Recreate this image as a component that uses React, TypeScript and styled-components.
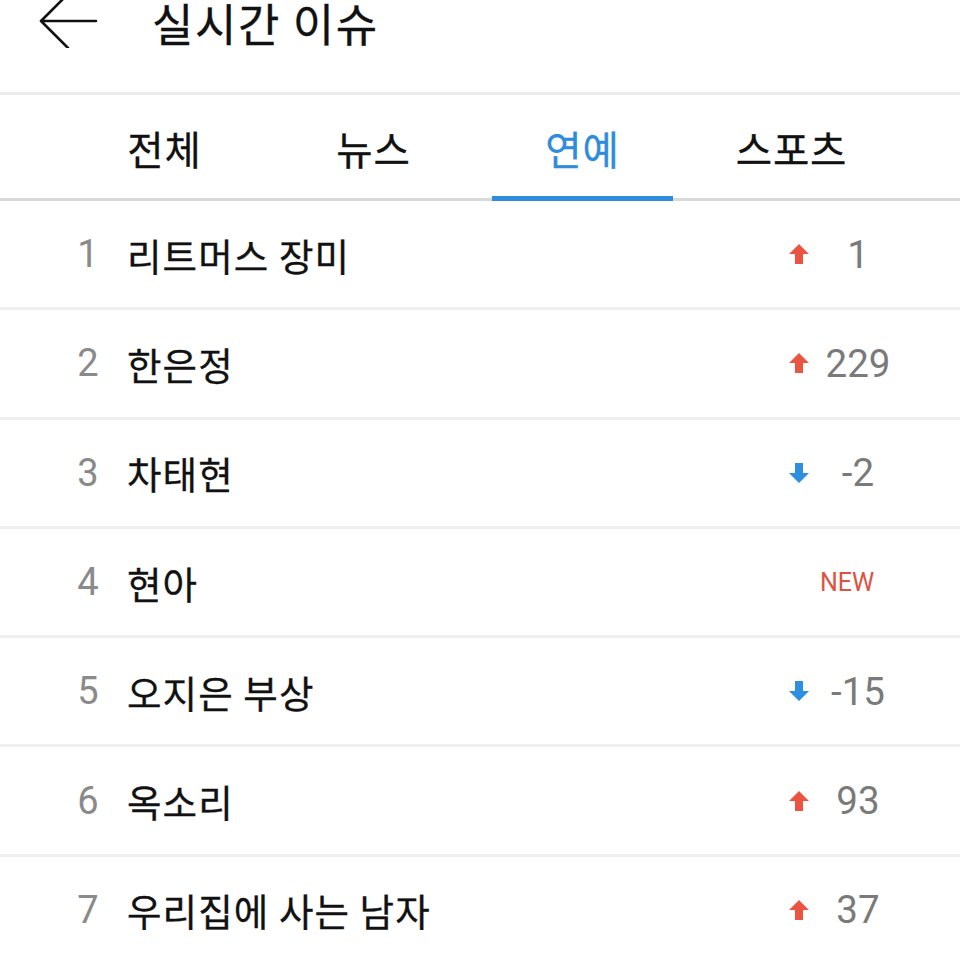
import styled, { createGlobalStyle } from "styled-components";

const GlobalStyle = createGlobalStyle`
  html, body {
    margin: 0;
    padding: 0;
    background: #ffffff;
  }
  body {
    font-family: Roboto, "Noto Sans CJK KR", sans-serif;
    color: #111111;
  }
`;

type Change = { dir: "up" | "down"; value: string } | { dir: "new" };

const tabs = ["전체", "뉴스", "연예", "스포츠"];
const activeTab = 2;

const issues: { name: string; change: Change }[] = [
  { name: "리트머스 장미", change: { dir: "up", value: "1" } },
  { name: "한은정", change: { dir: "up", value: "229" } },
  { name: "차태현", change: { dir: "down", value: "-2" } },
  { name: "현아", change: { dir: "new" } },
  { name: "오지은 부상", change: { dir: "down", value: "-15" } },
  { name: "옥소리", change: { dir: "up", value: "93" } },
  { name: "우리집에 사는 남자", change: { dir: "up", value: "37" } },
];

const Arrow = ({ dir }: { dir: "up" | "down" }) => (
  <ArrowIcon viewBox="0 0 22 22" $dir={dir}>
    <polygon points="11,1 21,11 15,11 15,21 7,21 7,11 1,11" />
  </ArrowIcon>
);

export default function App() {
  return (
    <Page>
      <GlobalStyle />
      <Header>
        <BackButton>
          <svg width="60" height="50" viewBox="0 0 60 50">
            <path
              d="M3 21 H58 M3 21 L30 -6 M3 21 L30 48"
              fill="none"
              stroke="#111"
              strokeWidth="2.6"
              strokeLinecap="round"
            />
          </svg>
        </BackButton>
        <Title>실시간 이슈</Title>
      </Header>

      <TabBar>
        {tabs.map((t, i) => (
          <Tab key={t} $active={i === activeTab}>
            {t}
          </Tab>
        ))}
      </TabBar>

      <List>
        {issues.map((item, i) => (
          <Row key={item.name}>
            <Rank>{i + 1}</Rank>
            <Name>{item.name}</Name>
            <ChangeCell>
              {item.change.dir === "new" ? (
                <NewBadge>NEW</NewBadge>
              ) : (
                <>
                  <Arrow dir={item.change.dir} />
                  <ChangeValue>{item.change.value}</ChangeValue>
                </>
              )}
            </ChangeCell>
          </Row>
        ))}
      </List>
    </Page>
  );
}

const Page = styled.div`
  width: 960px;
  height: 960px;
  overflow: hidden;
  background: #fff;
`;

const Header = styled.header`
  display: flex;
  align-items: flex-start;
  height: 92px;
  border-bottom: 3px solid #ececec;
`;

const BackButton = styled.div`
  width: 60px;
  height: 48px;
  margin-left: 38px;
  overflow: hidden;
`;

const Title = styled.h1`
  margin: 0 0 0 54px;
  font-family: "Noto Sans CJK KR", sans-serif;
  font-weight: 400;
  font-size: 45px;
  line-height: 46px;
  letter-spacing: 1.6px;
  color: #111;
  -webkit-text-stroke: 0.3px #111;
`;

const TabBar = styled.nav`
  display: flex;
  height: 103px;
  padding-left: 60px;
  border-bottom: 3px solid #d9d9d9;
`;

const Tab = styled.div<{ $active: boolean }>`
  position: relative;
  width: 209px;
  display: flex;
  align-items: center;
  justify-content: center;
  padding-top: 2px;
  font-family: "Noto Sans CJK KR", sans-serif;
  font-size: 39.5px;
  letter-spacing: 0.8px;
  color: ${(p) => (p.$active ? "#2f8cdc" : "#111")};
  -webkit-text-stroke: 0.3px currentColor;

  &::after {
    content: "";
    display: ${(p) => (p.$active ? "block" : "none")};
    position: absolute;
    left: 14px;
    right: 14px;
    bottom: -3px;
    height: 5px;
    background: #2f8cdc;
  }
`;

const List = styled.ul`
  margin: 0;
  padding: 0;
  list-style: none;
`;

const Row = styled.li`
  display: flex;
  align-items: center;
  height: 106.3px;
  border-bottom: 3px solid #efefef;
`;

const Rank = styled.span`
  width: 56px;
  margin-left: 60px;
  text-align: center;
  font-family: Roboto, sans-serif;
  font-size: 38px;
  color: #8a8a8a;
`;

const Name = styled.span`
  flex: 1;
  margin-left: 11px;
  font-family: "Noto Sans CJK KR", sans-serif;
  font-size: 37.5px;
  letter-spacing: 1.1px;
  color: #111;
  -webkit-text-stroke: 0.3px #111;
`;

const ChangeCell = styled.div`
  width: 118px;
  margin-right: 54px;
  display: flex;
  align-items: center;
  justify-content: center;
`;

const ArrowIcon = styled.svg<{ $dir: "up" | "down" }>`
  width: 22px;
  height: 22px;
  flex: none;
  fill: ${(p) => (p.$dir === "up" ? "#ea5440" : "#2d8fe2")};
  transform: ${(p) => (p.$dir === "down" ? "rotate(180deg)" : "none")};
`;

const ChangeValue = styled.span`
  flex: 1;
  text-align: center;
  font-family: Roboto, sans-serif;
  font-size: 38.5px;
  color: #7a7a7a;
`;

const NewBadge = styled.span`
  font-family: Roboto, sans-serif;
  font-size: 25px;
  color: #db5441;
`;
